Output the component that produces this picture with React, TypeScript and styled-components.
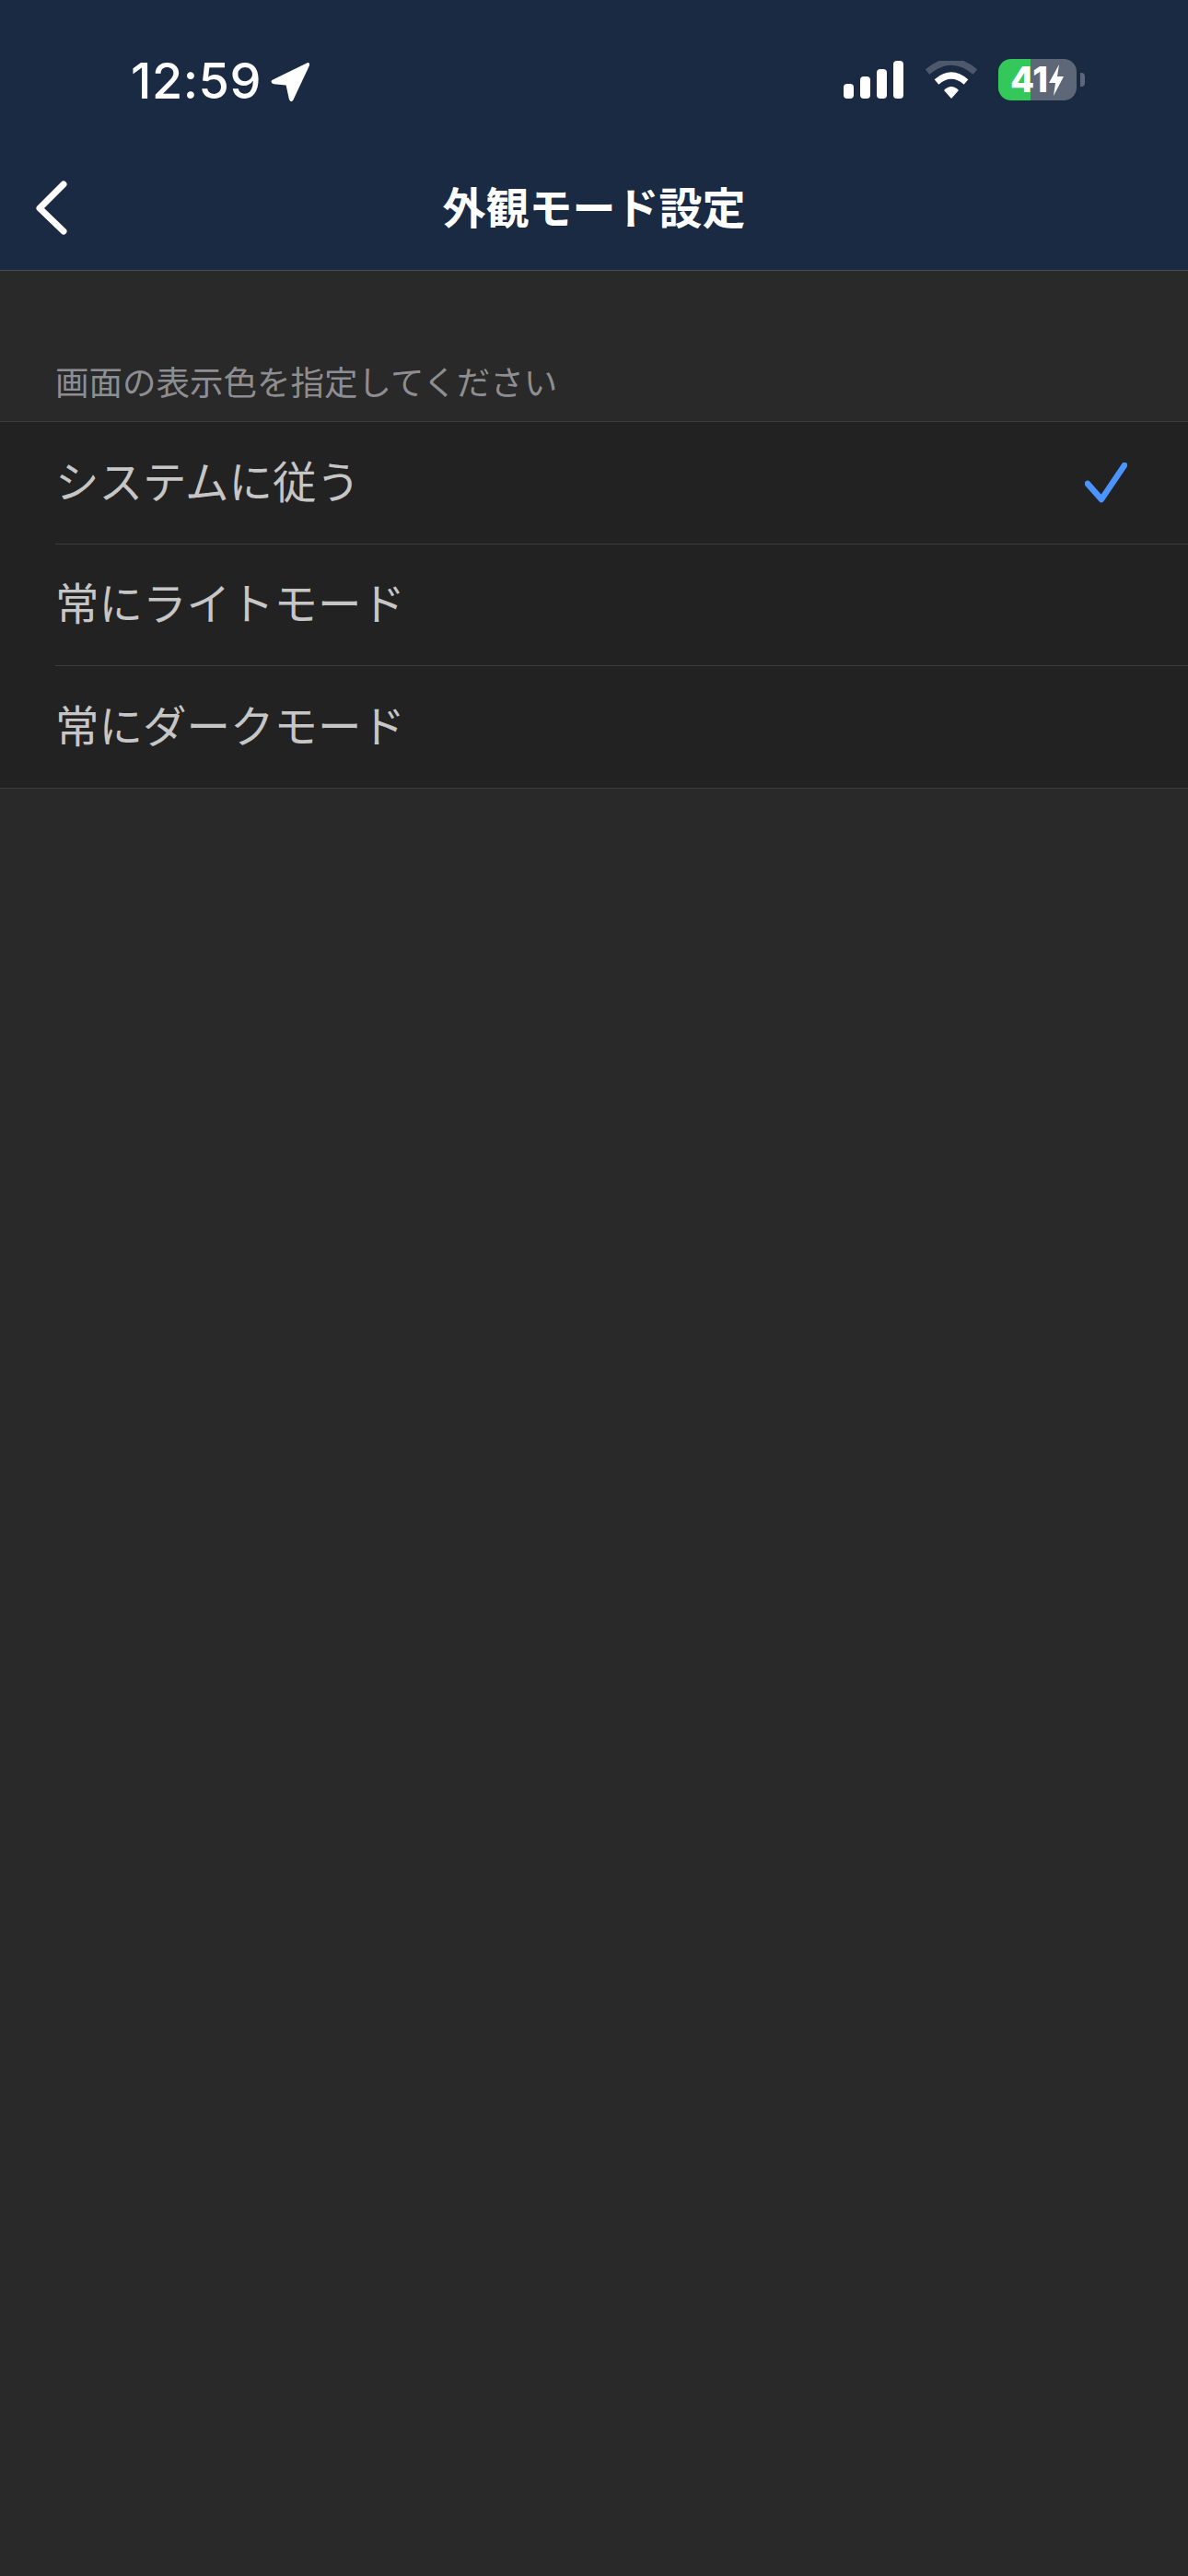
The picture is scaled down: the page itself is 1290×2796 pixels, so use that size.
import { createGlobalStyle, styled } from "styled-components";

const GlobalStyle = createGlobalStyle`
    html, body {
        margin: 0;
        padding: 0;
        background-color: #292929;
    }
`;

const Page = styled.div`
    width: 1290px;
    height: 2796px;
    background-color: #292929;
    font-family: "Inter", "Noto Sans CJK JP", sans-serif;
    overflow: hidden;
`;

const Header = styled.header`
    height: 293px;
    background-color: #1a2a42;
    border-bottom: 1px solid #4a4c50;
`;

const StatusBar = styled.div`
    height: 170px;
    display: flex;
    justify-content: space-between;
    padding: 0 112px 0 142px;
    align-items: flex-start;
`;

const TimeGroup = styled.div`
    display: flex;
    align-items: center;
    gap: 8px;
    margin-top: 56px;
`;

const Time = styled.span`
    color: #fff;
    font-size: 54px;
    font-weight: 500;
    line-height: 64px;
    letter-spacing: 0.5px;
`;

const StatusIcons = styled.div`
    display: flex;
    align-items: center;
    gap: 22px;
    margin-top: 64px;
`;

const BatteryWrap = styled.div`
    display: flex;
    align-items: center;
    gap: 4px;
`;

const Battery = styled.div`
    width: 85px;
    height: 45px;
    border-radius: 14px;
    background: linear-gradient(to right, #34c759 0, #34c759 35px, #5e6778 35px);
    display: flex;
    align-items: center;
    justify-content: center;
    color: #fff;
    font-size: 38px;
    font-weight: 800;
    line-height: 45px;
`;

const BatteryCap = styled.div`
    width: 5px;
    height: 15px;
    background-color: #5e6778;
    border-radius: 0 4px 4px 0;
`;

const NavBar = styled.div`
    height: 123px;
    box-sizing: border-box;
    padding-bottom: 12px;
    display: grid;
    grid-template-columns: 1fr auto 1fr;
    align-items: center;
`;

const BackButton = styled.button`
    background: none;
    border: 0;
    padding: 0 0 0 38px;
    display: flex;
    justify-self: start;
`;

const Title = styled.h1`
    margin: 0;
    color: #fff;
    font-size: 47px;
    font-weight: 700;
    line-height: 64px;
`;

const SectionLabel = styled.div`
    height: 163px;
    box-sizing: border-box;
    padding: 97px 0 0 60px;
    color: #8e8e92;
    font-size: 36.5px;
    line-height: 50px;
`;

const List = styled.ul`
    list-style: none;
    margin: 0;
    padding: 0;
    background-color: #222222;
    border-top: 1px solid #3c3c3c;
    border-bottom: 1px solid #3c3c3c;
`;

const Row = styled.li<{ $last?: boolean }>`
    height: 131.67px;
    margin-left: 60px;
    padding-right: 66px;
    display: flex;
    align-items: center;
    justify-content: space-between;
    border-bottom: ${(p) => (p.$last ? "0" : "1px solid #3c3c3c")};
`;

const RowLabel = styled.span`
    color: #c6c6c6;
    font-size: 47.5px;
    line-height: 64px;
`;

const Check = styled.svg`
    margin-top: 3px;
`;

const options = [
    { label: "システムに従う", checked: true },
    { label: "常にライトモード", checked: false },
    { label: "常にダークモード", checked: false },
];

export default function App() {
    return (
        <Page>
            <GlobalStyle />
            <Header>
                <StatusBar>
                    <TimeGroup>
                        <Time>12:59</Time>
                        <svg width="46" height="46" viewBox="0 0 42 42">
                            <path d="M3 20 L38 3 Q41 2 40 6 L24 40 Q22 43 20 39 L17 25 L5 24 Q1 23 3 20 Z" fill="#fff" />
                        </svg>
                    </TimeGroup>
                    <StatusIcons>
                        <svg width="66" height="42" viewBox="0 0 66 42">
                            <rect x="0" y="25" width="11" height="16" rx="4" fill="#fff" />
                            <rect x="18" y="17" width="11" height="24" rx="4" fill="#fff" />
                            <rect x="36" y="9" width="11" height="32" rx="4" fill="#fff" />
                            <rect x="54" y="0" width="11" height="41" rx="4" fill="#fff" />
                        </svg>
                        <svg width="58" height="42" viewBox="0 0 58 42">
                            <path d="M3 12 Q29 -10 55 12" fill="none" stroke="#4d586a" strokeWidth="7" />
                            <path d="M13 23 Q29 9 45 23" fill="none" stroke="#fff" strokeWidth="7" />
                            <path d="M21 32 Q29 24 37 32 L29 41 Z" fill="#fff" />
                        </svg>
                        <BatteryWrap>
                            <Battery>
                                41
                                <svg width="18" height="34" viewBox="0 0 18 34">
                                    <path d="M12 0 L1 20 L8 20 L6 34 L17 13 L10 13 Z" fill="#fff" />
                                </svg>
                            </Battery>
                            <BatteryCap />
                        </BatteryWrap>
                    </StatusIcons>
                </StatusBar>
                <NavBar>
                    <BackButton aria-label="back">
                        <svg width="36" height="60" viewBox="0 0 36 60">
                            <path d="M31 4 L5 30 L31 55" fill="none" stroke="#fff" strokeWidth="7" strokeLinecap="round" strokeLinejoin="round" />
                        </svg>
                    </BackButton>
                    <Title>外観モード設定</Title>
                </NavBar>
            </Header>
            <SectionLabel>画面の表示色を指定してください</SectionLabel>
            <List>
                {options.map((o, i) => (
                    <Row key={o.label} $last={i === options.length - 1}>
                        <RowLabel>{o.label}</RowLabel>
                        {o.checked ? (
                            <Check width="46" height="46" viewBox="0 0 46 46">
                                <path d="M3 23 L18 40 L43 3" fill="none" stroke="#4b93ff" strokeWidth="6.5" strokeLinecap="round" strokeLinejoin="round" />
                            </Check>
                        ) : null}
                    </Row>
                ))}
            </List>
        </Page>
    );
}
